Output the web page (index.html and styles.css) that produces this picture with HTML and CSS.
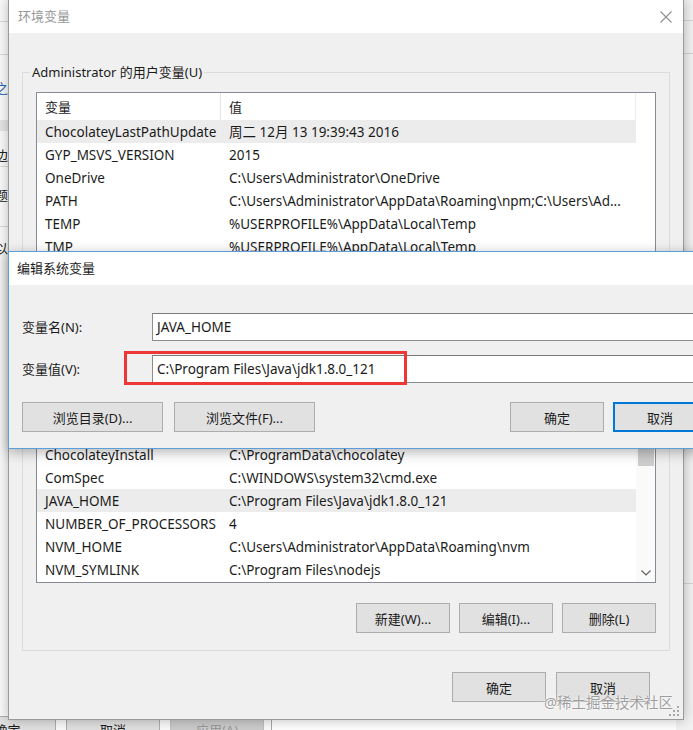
FILE: index.html
```html
<!DOCTYPE html>
<html lang="zh-CN">
<head>
<meta charset="utf-8">
<title>环境变量</title>
<link rel="stylesheet" href="styles.css">
</head>
<body>
<div class="bgwin">
  <div class="bg-row r1"></div>
  <div class="bg-row r2"></div>
  <div class="bg-txt t-link">之</div>
  <div class="bg-band"></div>
  <div class="bg-txt t1">边</div>
  <div class="bg-row r3"></div>
  <div class="bg-txt t2">题</div>
  <div class="bg-row r4"></div>
  <div class="bg-txt t3">以</div>
  <div class="bg-foot">
    <div class="bg-btn">确定</div>
    <div class="bg-btn">取消</div>
    <div class="bg-btn off">应用(A)</div>
  </div>
</div>
<div class="bgright">
  <div class="br-row a"></div>
  <div class="br-row b"></div>
  <div class="br-row c"></div>
</div>

<div class="win main">
  <div class="tbar">
    <span class="ttl dim">环境变量</span>
    <svg class="xbtn" width="12" height="12" viewBox="0 0 12 12"><path d="M0.5 0.5 L11.5 11.5 M11.5 0.5 L0.5 11.5" stroke="#8f8f8f" stroke-width="1.1" fill="none"/></svg>
  </div>
  <div class="wbody">
    <fieldset class="grp g-user">
      <legend>Administrator 的用户变量(U)</legend>
      <div class="lv lv-user">
        <div class="lv-main">
          <div class="lv-head"><span class="c1">变量</span><span class="c2">值</span></div>
          <div class="lv-row sel"><span class="c1">ChocolateyLastPathUpdate</span><span class="c2">周二 12月 13 19:39:43 2016</span></div>
          <div class="lv-row"><span class="c1">GYP_MSVS_VERSION</span><span class="c2">2015</span></div>
          <div class="lv-row"><span class="c1">OneDrive</span><span class="c2">C:\Users\Administrator\OneDrive</span></div>
          <div class="lv-row"><span class="c1">PATH</span><span class="c2">C:\Users\Administrator\AppData\Roaming\npm;C:\Users\Ad...</span></div>
          <div class="lv-row"><span class="c1">TEMP</span><span class="c2">%USERPROFILE%\AppData\Local\Temp</span></div>
          <div class="lv-row"><span class="c1">TMP</span><span class="c2">%USERPROFILE%\AppData\Local\Temp</span></div>
        </div>
        <div class="lv-sb plain"></div>
      </div>
    </fieldset>
    <fieldset class="grp g-sys">
      <div class="lv lv-sys">
        <div class="lv-main">
          <div class="lv-head"></div>
          <div class="lv-row"></div>
          <div class="lv-row"></div>
          <div class="lv-row"></div>
          <div class="lv-row"></div>
          <div class="lv-row"><span class="c1">ChocolateyInstall</span><span class="c2">C:\ProgramData\chocolatey</span></div>
          <div class="lv-row"><span class="c1">ComSpec</span><span class="c2">C:\WINDOWS\system32\cmd.exe</span></div>
          <div class="lv-row sel"><span class="c1">JAVA_HOME</span><span class="c2">C:\Program Files\Java\jdk1.8.0_121</span></div>
          <div class="lv-row"><span class="c1">NUMBER_OF_PROCESSORS</span><span class="c2">4</span></div>
          <div class="lv-row"><span class="c1">NVM_HOME</span><span class="c2">C:\Users\Administrator\AppData\Roaming\nvm</span></div>
          <div class="lv-row"><span class="c1">NVM_SYMLINK</span><span class="c2">C:\Program Files\nodejs</span></div>
        </div>
        <div class="lv-sb">
          <div class="thumb"></div>
          <svg class="down" width="10" height="6" viewBox="0 0 10 6"><path d="M0.5 0.5 L5 5 L9.5 0.5" stroke="#606060" stroke-width="1.2" fill="none"/></svg>
        </div>
      </div>
      <div class="btnrow">
        <button class="btn sm">新建(W)...</button>
        <button class="btn sm">编辑(I)...</button>
        <button class="btn sm">删除(L)</button>
      </div>
    </fieldset>
    <div class="foot">
      <button class="btn sm">确定</button>
      <button class="btn sm">取消</button>
    </div>
  </div>
  <div class="wm">@稀土掘金技术社区</div>
  <svg class="grip" width="10" height="10" viewBox="0 0 10 10"><g fill="#a8a8a8"><rect x="8" y="0" width="2" height="2"/><rect x="4" y="4" width="2" height="2"/><rect x="8" y="4" width="2" height="2"/><rect x="0" y="8" width="2" height="2"/><rect x="4" y="8" width="2" height="2"/><rect x="8" y="8" width="2" height="2"/></g></svg>
</div>

<div class="win edit">
  <div class="tbar"><span class="ttl">编辑系统变量</span></div>
  <div class="ebody">
    <div class="frow"><label class="flabel">变量名(N):</label><div class="field">JAVA_HOME</div></div>
    <div class="frow"><label class="flabel">变量值(V):</label><div class="field">C:\Program Files\Java\jdk1.8.0_121</div></div>
    <div class="ebtns">
      <button class="btn wide">浏览目录(D)...</button>
      <button class="btn wide">浏览文件(F)...</button>
      <button class="btn sm push">确定</button>
      <button class="btn sm focus">取消</button>
    </div>
  </div>
  <div class="redbox"></div>
</div>
</body>
</html>
```
FILE: styles.css
```css
* { box-sizing: border-box; }
html, body {
  margin: 0;
  width: 693px;
  height: 730px;
  overflow: hidden;
  background: #ffffff;
  font-family: "Noto Sans", "Noto Sans CJK SC", sans-serif;
  font-size: 13px;
  color: #1b1b1b;
}
body { position: relative; }

/* ---------- background windows ---------- */
.bgwin {
  position: absolute;
  left: -200px;
  top: -10px;
  width: 472px;
  height: 760px;
  background: #fbfbfb;
  border-right: 1px solid #a9a9a9;
  display: flex;
  flex-direction: column;
}
.bg-row { border-bottom: 1px solid #dcdcdc; }
.bg-row.r1 { height: 32px; }
.bg-row.r2 { height: 33px; }
.bg-txt {
  padding-left: 195px;
  height: 20px;
  line-height: 20px;
  font-size: 13px;
  color: #222;
}
.bg-txt.t-link { margin-top: 23px; color: #2a63b8; }
.bg-band { margin-top: 22px; height: 11px; background: #e6e6e6; }
.bg-txt.t1 { margin-top: 14px; }
.bg-row.r3 { height: 2px; }
.bg-txt.t2 { margin-top: 18px; }
.bg-row.r4 { height: 22px; }
.bg-txt.t3 { margin-top: 11px; }
.bg-foot {
  margin-top: auto;
  margin-bottom: 8px;
  display: flex;
  justify-content: flex-end;
  gap: 10px;
  padding-right: 7px;
}
.bg-btn {
  width: 94px;
  height: 26px;
  line-height: 26px;
  text-align: center;
  background: #e1e1e1;
  border: 1px solid #adadad;
}
.bg-btn:first-child { width: 97px; }
.bg-btn.off { background: #cccccc; border-color: #bfbfbf; color: #9a9a9a; }

.bgright {
  position: absolute;
  left: 676px;
  top: 0;
  width: 40px;
  height: 730px;
  background: #f2f2f2;
}
.br-row { border-bottom: 1px solid #d4d4d4; }
.br-row.a { height: 21px; }
.br-row.b { height: 33px; }
.br-row.c { height: 530px; }

/* ---------- windows ---------- */
.win {
  position: absolute;
  background: #f0f0f0;
}
.tbar {
  display: flex;
  align-items: center;
  height: 33px;
  background: #ffffff;
  padding-left: 8px;
}
.ttl { font-size: 13px; line-height: 33px; color: #1b1b1b; }
.ttl.dim { color: #999999; }

.main {
  left: 8px;
  top: -1px;
  width: 676px;
  height: 721px;
  border: 1px solid #9a9a9a;
  box-shadow: 0 0 12px rgba(0, 0, 0, 0.28);
}
.main .tbar { padding-left: 9px; }
.xbtn { margin-left: auto; margin-right: 11px; }

.wbody { padding: 0 13px; }

.grp {
  margin: 0;
  border: 1px solid #dcdcdc;
  padding: 11px 13px 6px;
  min-width: 0;
}
.grp legend {
  margin-left: -6px;
  padding: 0 2px;
  font-size: 13px;
  line-height: 18px;
  height: 18px;
}
.g-user { margin-top: 30px; }
.g-sys { margin-top: 14px; padding-top: 19px; padding-bottom: 17px; }

.lv {
  display: flex;
  border: 1px solid #878b93;
  background: #ffffff;
  overflow: hidden;
  font-size: 13.5px;
}
.lv-user { height: 190px; }
.lv-sys { height: 260px; }
.lv-main { flex: 1; min-width: 0; }
.lv-head, .lv-row {
  display: flex;
  white-space: nowrap;
}
.lv-head { height: 27px; line-height: 28px; }
.lv-row { height: 23px; line-height: 24px; }
.lv-row.sel { background: #ececec; }
.c1 { width: 184px; flex: none; padding-left: 8px; overflow: hidden; }
.c2 { flex: 1; padding-left: 8px; overflow: hidden; }
.lv-head .c1 { border-right: 1px solid #e5e5e5; }
.lv-head { border-right: 1px solid #ececec; }
.lv-head .c1, .lv-head .c2 { font-size: 13px; }
.lv-sb {
  width: 19px;
  flex: none;
  background: #fafafa;
  display: flex;
  flex-direction: column;
  align-items: center;
}
.lv-sb.plain { background: #ffffff; }
.thumb {
  width: 16px;
  height: 141px;
  margin-top: 1px;
  background: #cdcdcd;
}
.down { margin-top: auto; margin-bottom: 6px; }

.btn {
  font-family: inherit;
  font-size: 13px;
  color: #1b1b1b;
  height: 30px;
  padding: 0;
  background: #e1e1e1;
  border: 1px solid #adadad;
  border-radius: 0;
}
.btn.sm { width: 94px; }
.btn.wide { width: 141px; }
.btn.focus { border: 2px solid #0078d7; }

.btnrow {
  display: flex;
  justify-content: flex-end;
  gap: 9px;
  margin-top: 20px;
}
.foot {
  display: flex;
  justify-content: flex-end;
  gap: 10px;
  margin-top: 21px;
  padding-right: 20px;
}

.wm {
  position: absolute;
  right: 10px;
  top: 692px;
  font-size: 14.5px;
  line-height: 20px;
  color: rgba(140, 140, 140, 0.85);
  text-shadow: 0 0 2px #ffffff, 0 0 1px #ffffff;
}
.grip { position: absolute; right: 4px; bottom: 3px; }

/* ---------- edit dialog ---------- */
.edit {
  left: 8px;
  top: 251px;
  width: 713px;
  height: 198px;
  border: 1px solid #5a9fdc;
  box-shadow: 0 3px 12px rgba(0, 0, 0, 0.3);
}
.ebody { padding: 28px 13px 16px; }
.frow { display: flex; align-items: center; margin-bottom: 14px; }
.flabel { width: 130px; flex: none; line-height: 18px; }
.field {
  flex: 1;
  height: 28px;
  line-height: 26px;
  padding-left: 4px;
  font-size: 13.5px;
  background: #ffffff;
  border: 1px solid #8d8d8d;
  border-top-color: #7a7a7a;
  white-space: nowrap;
}
.ebtns { display: flex; gap: 11px; margin-top: 19px; }
.ebtns .push { margin-left: auto; }
.ebtns .focus { margin-left: -2px; }
.redbox {
  position: absolute;
  left: 115px;
  top: 99px;
  width: 283px;
  height: 34px;
  border: 3px solid #ee3636;
}
```
